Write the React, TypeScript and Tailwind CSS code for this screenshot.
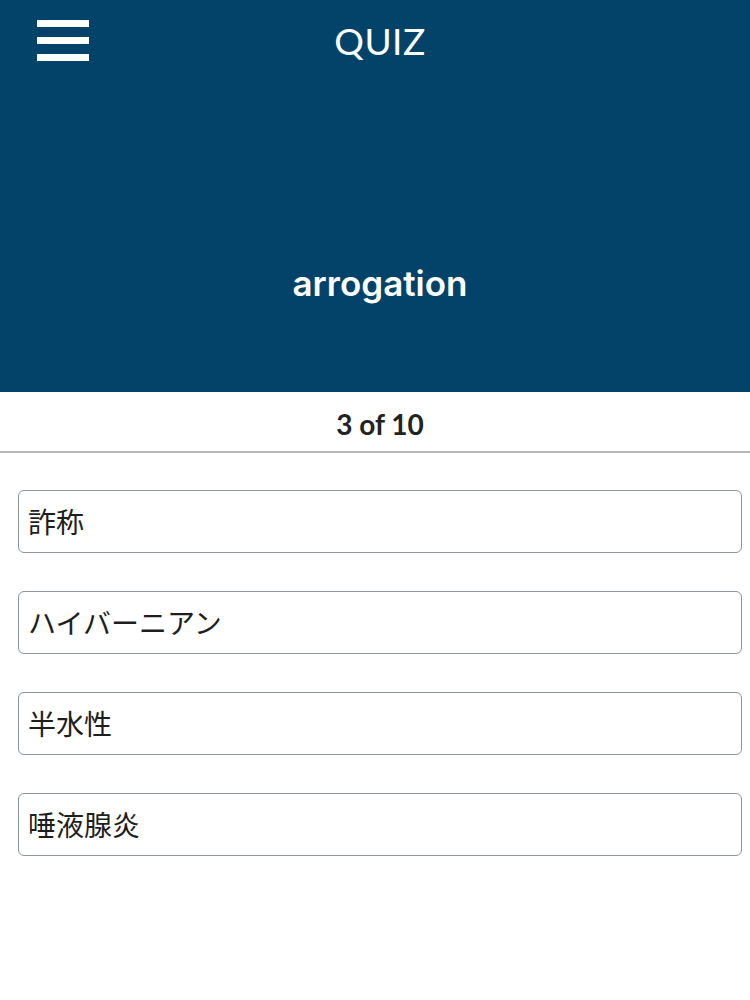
const OPTIONS = ["詐称", "ハイバーニアン", "半水性", "唾液腺炎"]

export default function App() {
  return (
    <div className="min-h-[1000px] w-[750px] bg-white font-['Lato','Noto_Sans_CJK_JP',sans-serif]">
      <header className="h-[392px] bg-[#044369] flex flex-col">
        <div className="relative h-[84px] flex items-center justify-center pl-[10px]">
          <button className="absolute left-[37px] top-[20px] flex flex-col gap-[10px]">
            <span className="block h-[7px] w-[52px] bg-white" />
            <span className="block h-[7px] w-[52px] bg-white" />
            <span className="block h-[7px] w-[52px] bg-white" />
          </button>
          <h1 className="text-white text-[37px] font-normal tracking-[0.5px] leading-none -mt-[4px]">QUIZ</h1>
        </div>
        <div className="flex-1 flex items-center justify-center pl-[10px]">
          <p className="text-white text-[35px] font-semibold font-['Inter',sans-serif] leading-none pt-[90px]">
            arrogation
          </p>
        </div>
      </header>

      <div className="h-[61px] border-b-2 border-[#b8b8b8] flex items-center justify-center pl-[10px]">
        <span className="text-[28px] font-bold text-[#222] font-['Lato',sans-serif] pt-[4px]">3 of 10</span>
      </div>

      <div className="pl-[18px] pr-[8px] pt-[37px] flex flex-col gap-[38px]">
        {OPTIONS.map((option) => (
          <button
            key={option}
            className="h-[63px] w-full rounded-[6px] border border-[#8c959c] bg-white px-[9px] pb-[2px] text-left text-[28px] text-[#1e1e1e] font-['Noto_Sans_CJK_JP',sans-serif]"
          >
            {option}
          </button>
        ))}
      </div>
    </div>
  )
}
